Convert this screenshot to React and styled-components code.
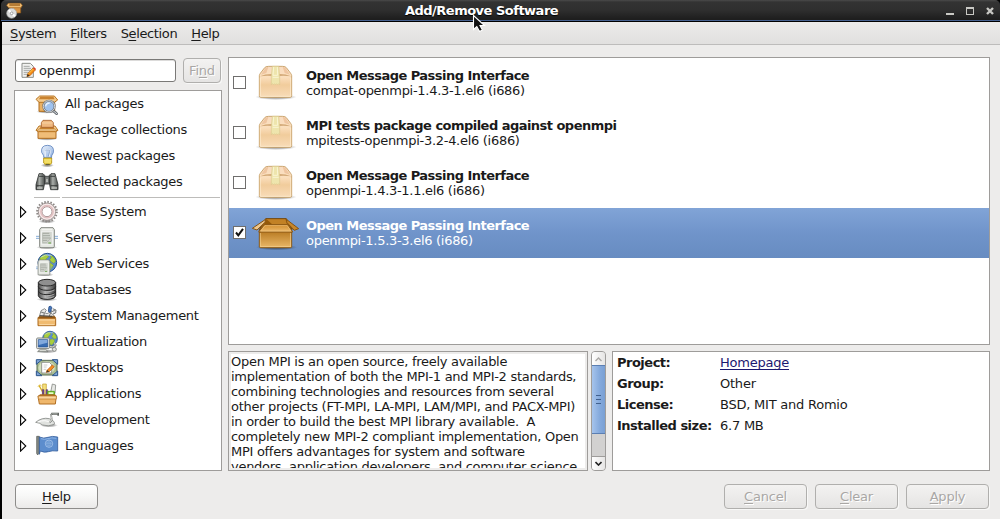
import React from 'react';
import styled, { createGlobalStyle, css } from 'styled-components';

const GlobalStyle = createGlobalStyle`
  *, *::before, *::after { box-sizing: border-box; }
  html, body { margin: 0; padding: 0; overflow: hidden; }
  body { font: 13px/15px "DejaVu Sans", sans-serif; letter-spacing: -.27px; color: #1a1a1a; background: #edeceb; }
  u { text-decoration: underline; text-decoration-thickness: 1px; text-underline-offset: 2px; text-decoration-skip-ink: none; }
  svg { display: block; flex: none; }
`;

const Window = styled.div`
  width: 1000px;
  height: 519px;
  display: flex;
  flex-direction: column;
  background: #000;
  overflow: hidden;
`;

const TitleBar = styled.header`
  position: relative;
  height: 22px;
  flex: none;
  display: grid;
  grid-template-columns: 60px 1fr 60px;
  margin-left: 1px;
  padding: 2px 6px 0 5px;
  background: linear-gradient(#4a4a4a 0, #333 2px, #2f2f2f 10px, #1e1e1e 19px);
  border-bottom: 1px solid #000;
  box-shadow: inset 0 -1px #46618f;
  border-radius: 5px 5px 0 0;
`;

const Title = styled.h1`
  margin: 0;
  padding: 1px 37px 0 0;
  text-align: center;
  font-size: 13px;
  line-height: 15px;
  letter-spacing: -.5px;
  color: #fff;
  text-shadow: 0 1px 1px #000;
`;

const WindowControls = styled.div`
  display: flex;
  justify-content: flex-end;
  gap: 12px;
  padding-top: 5px;
`;

const Pointer = styled.svg`
  position: absolute;
  left: 471px;
  top: 14px;
  z-index: 5;
`;

const Frame = styled.div`
  flex: 1;
  display: flex;
  flex-direction: column;
  border-left: 2px solid #000;
  background: #edeceb;
`;

const MenuBar = styled.nav`
  height: 23px;
  flex: none;
  display: flex;
  gap: 14px;
  padding: 4px 0 0 8px;
  letter-spacing: -.37px;
  background: linear-gradient(#ecebea, #e1e0df);
  border-bottom: 1px solid #bdbcbb;
`;

const MenuItem = styled.span`
  white-space: pre;
`;

const Content = styled.main`
  flex: 1;
  display: flex;
  gap: 6px;
  padding: 12px 10px 0 12px;
`;

const LeftColumn = styled.div`
  width: 208px;
  display: flex;
  flex-direction: column;
`;

const SearchRow = styled.div`
  height: 33px;
  display: flex;
  align-items: flex-start;
  gap: 7px;
  padding: 1px 1px 0;
`;

const SearchField = styled.div`
  width: 161px;
  height: 23px;
  margin-top: 1px;
  display: flex;
  align-items: center;
  gap: 3px;
  padding: 0 5px;
  letter-spacing: -.15px;
  background: #fff;
  border: 1px solid #7a7977;
  border-radius: 3px;
  box-shadow: inset 0 1px #dcdbda;
`;

const Button = styled.button`
  width: ${(p) => p.$width || 83}px;
  height: 25px;
  padding: 0;
  font: inherit;
  letter-spacing: -.2px;
  text-align: center;
  border-radius: 4px;
  border: 1px solid #8d8c8a;
  color: #1a1a1a;
  background: linear-gradient(#fff, #f8f8f7 45%, #ebeae9);
  ${(p) =>
    p.disabled &&
    css`
      color: #a9a7a5;
      text-shadow: 1px 1px #fff;
      border-color: #b0afad;
      background: linear-gradient(#f3f2f1, #e5e4e3);
      box-shadow: 1px 1px #f8f8f7;
    `}
`;

const Sidebar = styled.ul`
  height: 381px;
  margin: 0;
  padding: 0;
  list-style: none;
  background: #fff;
  border: 1px solid #9e9c9a;
`;

const SidebarRow = styled.li`
  height: 26px;
  display: grid;
  grid-template-columns: 20px 24px 1fr;
  align-items: center;
  padding-left: 0;
`;

const SidebarLabel = styled.span`
  padding: 0 0 2px 6px;
`;

const Expander = styled.svg`
  margin: 0 0 1px 5px;
`;

const SidebarDivider = styled.li`
  height: 4px;
  display: grid;
  grid-template-columns: 26px 1fr;
  gap: 2px;
  padding: 2px 1px 0 19px;
  &::before, &::after { content: ""; height: 1px; background: #bdbcba; }
`;

const RightColumn = styled.div`
  flex: 1;
  min-width: 0;
  display: flex;
  flex-direction: column;
  gap: 6px;
`;

const PackageList = styled.div`
  height: 288px;
  flex: none;
  background: #fff;
  border: 1px solid #9e9c9a;
`;

const PackageRow = styled.div`
  height: 50px;
  display: flex;
  align-items: center;
  padding-left: 4px;
  ${(p) =>
    p.$selected &&
    css`
      color: #fff;
      background: linear-gradient(#81a4d7, #7094ca 50%, #678cc1);
    `}
`;

const CheckBox = styled.span`
  width: 13px;
  height: 13px;
  margin: -1px 6px 0 0;
  background: #fff;
  border: 1px solid #6f6e6d;
`;

const PackageText = styled.div`
  display: flex;
  flex-direction: column;
  padding-left: 6px;
  white-space: nowrap;
  letter-spacing: -.29px;
  b { letter-spacing: -.53px; }
`;

const DetailRow = styled.div`
  height: 120px;
  display: flex;
`;

const Description = styled.div`
  width: 360px;
  height: 120px;
  border: 1px solid #9e9c9a;
  padding: 2px;
  background: #edeceb;
`;

const DescriptionText = styled.div`
  height: 114px;
  overflow: hidden;
  white-space: pre;
  letter-spacing: -.28px;
  background: #fff;
`;

const ScrollBar = styled.div`
  width: 15px;
  height: 120px;
  margin: 0 6px 0 3px;
  display: flex;
  flex-direction: column;
  background: #d2d1d0;
  border: 1px solid #9e9c9a;
  border-radius: 4px;
  overflow: hidden;
`;

const ScrollButton = styled.div`
  height: 14px;
  display: grid;
  place-items: center;
  background: linear-gradient(90deg, #fff, #e6e5e4);
  ${(p) => (p.$end ? 'border-top: 1px solid #9e9c9a; margin-top: auto;' : '')}
`;

const ScrollThumb = styled.div`
  height: 69px;
  margin: -1px -1px 0;
  display: flex;
  flex-direction: column;
  justify-content: center;
  align-items: center;
  gap: 2px;
  border: 1px solid #5b7fb3;
  background: linear-gradient(90deg, #a6c4ec, #84a9dc 60%, #799fd3);
`;

const Grip = styled.i`
  width: 5px;
  height: 1px;
  margin-bottom: 1px;
  background: #41618f;
`;

const Info = styled.dl`
  flex: 1;
  margin: 0;
  display: grid;
  grid-template-columns: 103px 1fr;
  grid-auto-rows: 21px;
  padding: 3px 0 0 4px;
  background: #fff;
  border: 1px solid #9e9c9a;
  letter-spacing: -.23px;
  dt { font-weight: bold; white-space: nowrap; letter-spacing: -.5px; }
  dd { margin: 0; }
`;

const HomeLink = styled.a`
  color: #1c1870;
  text-decoration: underline;
  text-decoration-skip-ink: none;
  text-decoration-thickness: 1px;
  text-underline-offset: 2px;
`;

const Footer = styled.footer`
  height: 48px;
  flex: none;
  display: flex;
  gap: 8px;
  padding: 13px 11px 0 13px;
`;

const Spacer = styled.span`
  flex: 1;
`;

const Gradients = () => (
  <svg width="0" height="0" style={{ position: 'absolute' }}>
    <defs>
      <linearGradient id="bulb" x1="0" y1="0" x2="1" y2="1"><stop stopColor="#eaf2fc" /><stop offset="1" stopColor="#8fb0e0" /></linearGradient>
      <linearGradient id="carton" x1="0" y1="0" x2="0" y2="1"><stop stopColor="#f9dcc0" /><stop offset=".35" stopColor="#fbdfbd" /><stop offset=".6" stopColor="#f1cc9c" /><stop offset="1" stopColor="#f8dcb8" /></linearGradient>
      <linearGradient id="crate" x1="0" y1="0" x2="0" y2="1"><stop stopColor="#b3741b" /><stop offset="1" stopColor="#eab868" /></linearGradient>
      <linearGradient id="flap" x1="0" y1="0" x2="0" y2="1"><stop stopColor="#d08a28" /><stop offset="1" stopColor="#eebd72" /></linearGradient>
      <linearGradient id="drum" x1="0" x2="1"><stop stopColor="#4b4b4b" /><stop offset=".4" stopColor="#b5b5b5" /><stop offset="1" stopColor="#3a3a3a" /></linearGradient>
      <linearGradient id="lens" x1="0" x2="1"><stop stopColor="#3d403e" /><stop offset=".4" stopColor="#a9ada9" /><stop offset="1" stopColor="#4a4e4c" /></linearGradient>
      <radialGradient id="shade"><stop stopColor="#000" stopOpacity=".45" /><stop offset=".6" stopColor="#000" stopOpacity=".25" /><stop offset="1" stopColor="#000" stopOpacity="0" /></radialGradient>
    </defs>
  </svg>
);

const Shade = ({ cy = 64, rx = 32, cx = 36 }) => <ellipse cx={cx} cy={cy} rx={rx} ry="6" fill="url(#shade)" />;

const Globe = ({ cx, cy, r }) => (
  <g transform={`translate(${cx} ${cy}) scale(${r / 29})`}>
    <circle r="28" fill="#5b8bd0" stroke="#234f91" strokeWidth="3" />
    <path d="M-22-14Q-14-25-3-24L4-18L-3-12L-8-3L-14 0L-11 8L-18 12Q-26 2-22-14ZM8-23Q20-20 25-5L20 2L12-2L7-9L12-15ZM0 3L10 1L18 8L12 19L4 25L-2 15Z" fill="#a9cf3e" stroke="#789c26" strokeWidth="1.5" />
    <path d="M-20-16Q-6-27 13-22" fill="none" stroke="#d5e5fb" strokeWidth="2" />
  </g>
);

const Server = () => (
  <g>
    <path d="M18 5h36l4 6v50q0 4-4 4H18q-4 0-4-4V11z" fill="#e4e7e1" stroke="#858983" strokeWidth="3" />
    <path d="M21 10h30M20 16v40h32V16z" fill="#d2d6cf" stroke="#fff" strokeWidth="2" />
    <path d="M23 22h20M23 29h22M23 36h24M23 43h14" stroke="#9ba098" strokeWidth="2.5" />
    <path d="M23 22v28h12l12-14" fill="none" stroke="#abb0a8" strokeWidth="2" />
    <path d="M40 51h8" stroke="#5d9c3a" strokeWidth="3" />
  </g>
);

const icons = {
  search: (
    <g>
      <Shade cy={59} />
      <path d="M12 25h47v33H12z" fill="#eab164" stroke="#b06d1c" strokeWidth="3" />
      <path d="M14 12h44l10 12-10 7H12L3 22z" fill="#f4cb8e" stroke="#b87522" strokeWidth="3" />
      <path d="M16 14h39l4 8H12z" fill="#c98331" />
      <path d="M53 55l12 10" stroke="#656a70" strokeWidth="8" strokeLinecap="round" />
      <path d="M53 55l12 10" stroke="#d7dce2" strokeWidth="3" strokeLinecap="round" />
      <circle cx="42" cy="43" r="17" fill="#9fc2ee" stroke="#6b7076" strokeWidth="6" />
      <circle cx="42" cy="43" r="17" fill="none" stroke="#e6e8ea" strokeWidth="2.5" />
      <path d="M32 43q1-10 12-10" stroke="#e8f2fe" strokeWidth="4" fill="none" />
    </g>
  ),
  collection: (
    <g>
      <Shade cy={62} />
      <path d="M9 36h54v25H9z" fill="#f0bd78" stroke="#af6b1f" strokeWidth="3" />
      <path d="M12 24h48l9 13-7 4H10l-7-4z" fill="#f7d29b" stroke="#b87522" strokeWidth="3" />
      <path d="M16 27h40l3 7H13z" fill="#cd8734" />
      <path d="M24 7h25l6 7v14H19V14z" fill="#f0b980" stroke="#a7602a" strokeWidth="2.5" />
      <path d="M21 15h32" stroke="#fbe2bd" strokeWidth="2" />
      <path d="M11 33h50l5 6H6z" fill="#f9d9a8" stroke="#b87522" strokeWidth="2" />
    </g>
  ),
  bulb: (
    <g>
      <Shade cy={64} cx={37} rx={20} />
      <path d="M27 42Q27 34 20 25Q17 4 38 4Q59 5 55 26Q49 34 49 42z" fill="url(#bulb)" stroke="#5d82bd" strokeWidth="2.5" />
      <path d="M31 38L30 20Q34 14 38 20Q42 14 46 20L43 38" stroke="#fff" strokeWidth="2.5" fill="none" />
      <path d="M31 20q4-4 7 0q4-4 7 0l-5 17" stroke="#6684b3" strokeWidth="1.5" fill="none" />
      <path d="M26 42h24v15l-5 5H31l-5-5z" fill="#ecd03c" stroke="#b28d0c" strokeWidth="2.5" />
      <path d="M27 48h22M28 54h20" stroke="#fff5a2" strokeWidth="2.5" />
      <path d="M32 61h12" stroke="#55533f" strokeWidth="3" />
    </g>
  ),
  binoculars: (
    <g>
      <path d="M29 19h14v23H29z" fill="#7c807e" stroke="#353938" strokeWidth="2.5" />
      <path d="M12 11h12l5 5v23l-4 20H3V44z" fill="url(#lens)" stroke="#303432" strokeWidth="2.5" />
      <path d="M60 11H48l-5 5v23l4 20h22V44z" fill="url(#lens)" stroke="#303432" strokeWidth="2.5" />
      <path d="M5 47h20M47 47h20M12 19h14M46 19h14" stroke="#2c302f" strokeWidth="2.5" />
      <path d="M6 54h16M50 54h16" stroke="#b8bbb7" strokeWidth="4" />
      <path d="M33 27h6v9h-6z" fill="#b3b6b2" />
    </g>
  ),
  gear: (
    <g>
      <Shade cy={64} rx={26} />
      <circle cx="36" cy="35" r="29.5" fill="none" stroke="#8d8886" strokeWidth="6" strokeDasharray="4.6 4.67" />
      <circle cx="36" cy="35" r="26" fill="#efdddd" stroke="#8f8786" strokeWidth="2.5" />
      <circle cx="36" cy="35" r="22" fill="none" stroke="#f8efee" strokeWidth="3" />
      <circle cx="36" cy="35" r="15" fill="#fff" stroke="#98807f" strokeWidth="2.5" />
      <circle cx="36" cy="35" r="18.5" fill="none" stroke="#e2bfc0" strokeWidth="4" />
    </g>
  ),
  server: (
    <g>
      <Shade />
      <path d="M3 31h66M3 37h66" stroke="#6e9bd0" strokeWidth="2.5" />
      <Server />
    </g>
  ),
  web: (
    <g>
      <Shade cx={30} cy={68} rx={26} />
      <Globe cx={37} cy={32} r={29} />
      <path d="M3 45h6M3 50h6M45 45h7M45 50h7" stroke="#6e9bd0" strokeWidth="2" />
      <g transform="translate(-2 20) scale(.8 .75)"><Server /></g>
    </g>
  ),
  database: (
    <g>
      <Shade />
      <path d="M10 14v39q3 11 26 11t26-11V14z" fill="url(#drum)" stroke="#252525" strokeWidth="3" />
      <path d="M10 26q3 11 26 11t26-11M10 39q3 11 26 11t26-11" fill="none" stroke="#2b2b2b" strokeWidth="3" />
      <path d="M35 42q15-1 23-6M35 54q15-1 23-6M35 61q15-1 23-6" fill="none" stroke="#c9c9c9" strokeWidth="2" />
      <ellipse cx="36" cy="14" rx="26" ry="10" fill="#8f8f8f" stroke="#2a2a2a" strokeWidth="3" />
    </g>
  ),
  toolbox: (
    <g>
      <path d="M12 42l6-22 11-6 5 5-5 7 7 3 8-4 12 8 3 10z" fill="#e9e9e7" stroke="#777a78" strokeWidth="2.5" />
      <path d="M18 24l10 3-2 11M50 19l-8 19M46 26l14-8M53 14l10 4-1 9-8 3" fill="#ddd" stroke="#777a78" strokeWidth="3" />
      <path d="M42 8q6-4 8 2l-3 13q-4 4-7-1z" fill="#4978bb" stroke="#224b89" strokeWidth="2.5" />
      <path d="M8 42h54l-3-5H14z" fill="#825016" stroke="#9e6118" strokeWidth="2" />
      <path d="M9 43h53v22H9z" fill="#f0bb70" stroke="#ab681b" strokeWidth="3" />
      <path d="M11 48h49M13 62h45" stroke="#fbdba8" strokeWidth="3" />
      <path d="M14 35l38 2" stroke="#444" strokeWidth="3" />
    </g>
  ),
  virtual: (
    <g>
      <Shade cx={35} />
      <Globe cx={45} cy={26} r={23} />
      <path d="M44 50q12 4 17-4l-2-8" fill="none" stroke="#777b7a" strokeWidth="7" />
      <path d="M44 50q12 4 17-4l-2-8" fill="none" stroke="#e1e2df" strokeWidth="3" />
      <path d="M17 57h14l8 8H8z" fill="#d5d8d2" stroke="#777b76" strokeWidth="2.5" />
      <rect x="5" y="24" width="38" height="32" rx="3" fill="#edeeeb" stroke="#7e827d" strokeWidth="3" />
      <path d="M10 29h28v22H10z" fill="#396db4" stroke="#204b8b" strokeWidth="2" />
      <path d="M11 30h26v8L11 45z" fill="#82a9dd" />
      <circle cx="58" cy="58" r="6" fill="#e4e5e2" stroke="#777b76" strokeWidth="2.5" />
    </g>
  ),
  desktop: (
    <g>
      <path d="M6 13h60v44H6z" fill="#a9bd91" stroke="#586c53" strokeWidth="3" />
      <ellipse cx="35" cy="35" rx="25" ry="19" fill="#d2deb9" />
      <path d="M4 11h17L4 25zM68 11H52l16 14zM4 59h17L4 45zM68 59H52l16-14z" fill="#7fa5d6" stroke="#2f578d" strokeWidth="3" />
      <path d="M20 19h23l7 7v25H20z" fill="#fff" stroke="#82857f" strokeWidth="2.5" />
      <path d="M26 27h11M26 33h9M26 40h8" stroke="#b4b7b1" strokeWidth="2" />
      <path d="M36 43l16-16 6 5-15 15-9 2z" fill="#f38e23" stroke="#b95510" strokeWidth="2" />
      <path d="M34 49l3-7 6 5z" fill="#443b27" />
    </g>
  ),
  apps: (
    <g>
      <path d="M12 10l16 29" stroke="#d5aa20" strokeWidth="4" />
      <path d="M9 14l6-6 5 5" fill="none" stroke="#e1bd39" strokeWidth="3" />
      <path d="M23 6h11v34H23z" fill="#f5df7a" stroke="#bf9b24" strokeWidth="2" />
      <path d="M22 23h5v17h-5zM33 23h5v17h-5z" fill="#744d92" stroke="#4c2a68" strokeWidth="1.5" />
      <path d="M47 31l5-25 10 3-2 25z" fill="#e7e8e5" stroke="#888b87" strokeWidth="2.5" />
      <path d="M38 28h20v12H38z" fill="#81d536" stroke="#4c9712" strokeWidth="2.5" />
      <path d="M41 31h14v5H41z" fill="#e7fbd4" />
      <path d="M10 43l5-6h45l5 6z" fill="#a96822" />
      <path d="M9 42h55l-3 24H13z" fill="#efb76c" stroke="#b16e22" strokeWidth="3" />
      <path d="M10 42h54v9H10z" fill="#f9d59e" stroke="#b87727" strokeWidth="2" />
    </g>
  ),
  trowel: (
    <g>
      <Shade cx={42} cy={52} rx={27} />
      <path d="M2 43Q21 27 43 32Q61 39 58 49Q40 57 23 51Q13 44 2 43Z" fill="#dfe1de" stroke="#858985" strokeWidth="2.5" />
      <path d="M8 42q22-9 43 3" stroke="#fff" strokeWidth="3" fill="none" />
      <path d="M43 42q8 0 7-10l-2-12 5-3" stroke="#7b7f7b" strokeWidth="5" fill="none" />
      <path d="M43 42q8 0 7-10l-2-12 5-3" stroke="#f4f4f2" strokeWidth="2" fill="none" />
      <path d="M49 17h21v6" stroke="#626662" strokeWidth="6" fill="none" />
      <path d="M51 16h17" stroke="#b7bbb6" strokeWidth="2" />
    </g>
  ),
  flag: (
    <g>
      <path d="M5 7h8v48l-5 8-3-5z" fill="#858985" stroke="#525652" strokeWidth="2" />
      <path d="M13 9q13 6 26 1t29-1v42q-16-2-28 2t-24-2l-3 10z" fill="#5c8dcd" stroke="#355f9e" strokeWidth="2.5" />
      <path d="M18 14q11 4 21 0t25-1" stroke="#8eb4e5" strokeWidth="3" fill="none" />
      <circle cx="42" cy="29" r="11" fill="none" stroke="#a9c6ec" strokeWidth="2.5" />
      <path d="M36 24h11v10H36zM42 20v19M33 29h18" fill="none" stroke="#8db2e1" strokeWidth="2" />
    </g>
  ),
};

const SideIcon = ({ name }) => <svg width="24" height="24" viewBox="0 0 72 72">{icons[name]}</svg>;

const ClosedBox = () => (
  <svg width="48" height="48" viewBox="0 0 144 144">
    <ellipse cx="72" cy="114" rx="62" ry="9" fill="url(#shade)" />
    <path d="M22 50Q22 47 25 43L38 26Q41 22 50 22H91Q100 22 103 26L116 43Q119 47 119 50V110Q119 115 115 115H26Q22 115 22 110Z" fill="url(#carton)" stroke="#c49c63" strokeWidth="2.6" />
    <path d="M27 47L40 28Q44 24 49 24L43 42zM114 47L101 28Q97 24 92 24L98 42z" fill="#efc5a0" />
    <path d="M24 52Q45 43 70 46Q96 43 117 52Q94 49 71 52Q46 49 24 52Z" fill="#d3a977" />
    <path d="M25 56V112H116V56" fill="none" stroke="#fff0d8" strokeWidth="2" />
    <path d="M61 22h19l3 28v27l-3-3-3 3-3-3-3 3-3-3-3 3-3-3-4 3V50z" fill="#eee5ad" stroke="#d4c487" strokeWidth="1.5" />
    <path d="M65 24l-2 25h14l-1-25M62 55h18" stroke="#faf5d3" strokeWidth="3" fill="none" />
  </svg>
);

const OpenBox = () => (
  <svg width="48" height="48" viewBox="0 0 144 144">
    <ellipse cx="74" cy="115" rx="62" ry="9" fill="url(#shade)" />
    <path d="M41 29H103L120 62H22Z" fill="#a76812" stroke="#744506" strokeWidth="3" />
    <path d="M44 31H100L105 47H38Z" fill="#c28125" />
    <path d="M44 31L62 47H36Z" fill="#955909" />
    <path d="M41 31L1 58L15 63L39 40Z" fill="#edc68d" stroke="#885411" strokeWidth="3" />
    <path d="M103 31L140 59L127 64L105 41Z" fill="#c9872b" stroke="#885411" strokeWidth="3" />
    <path d="M22 62H119V112Q119 116 115 116H26Q22 116 22 112Z" fill="url(#crate)" stroke="#80500f" strokeWidth="3" />
    <path d="M25 72V113H116V72" fill="none" stroke="#f6d497" strokeWidth="2" />
    <path d="M37 47H107L122 69H20Z" fill="url(#flap)" stroke="#8a5715" strokeWidth="3" />
    <path d="M39 50H106L117 66H26Z" fill="none" stroke="#f1c580" strokeWidth="2" />
  </svg>
);

const AppIcon = () => (
  <svg width="18" height="18" viewBox="0 0 54 54">
    <path d="M11 13h33v20H11z" fill="#d99545" stroke="#8d5516" strokeWidth="2" />
    <path d="M7 4h37l5 6-4 7H8L2 10z" fill="#eebd75" stroke="#a3641d" strokeWidth="2" />
    <path d="M10 9h32" stroke="#9b5c17" strokeWidth="4" />
    <circle cx="17" cy="34" r="15" fill="#dcdddb" stroke="#a0a2a0" strokeWidth="2" />
    <path d="M8 24l9 10 10 9" stroke="#fff" strokeWidth="6" />
    <circle cx="17" cy="34" r="4" fill="#fff" stroke="#777" strokeWidth="2" />
  </svg>
);

const EditIcon = () => (
  <svg width="15" height="17" viewBox="0 0 45 51">
    <path d="M3 4h25l9 9v33H3z" fill="#f2f2f0" stroke="#8b8d89" strokeWidth="3" />
    <path d="M8 13h18M8 19h22M8 25h20M8 31h16M8 37h10" stroke="#989a96" strokeWidth="2.5" />
    <path d="M20 35L36 18l7 6-16 17-9 3z" fill="#f58a16" stroke="#b85a0b" strokeWidth="2" />
    <path d="M23 35L38 20" stroke="#fcd04b" strokeWidth="3" />
    <path d="M36 18l4-2 5 5-2 4z" fill="#dd3d2b" />
    <path d="M17 44l3-8 6 5z" fill="#3b3223" />
  </svg>
);

const sources = [
  ['search', 'All packages'],
  ['collection', 'Package collections'],
  ['bulb', 'Newest packages'],
  ['binoculars', 'Selected packages'],
];

const groups = [
  ['gear', 'Base System'],
  ['server', 'Servers'],
  ['web', 'Web Services'],
  ['database', 'Databases'],
  ['toolbox', 'System Management'],
  ['virtual', 'Virtualization'],
  ['desktop', 'Desktops'],
  ['apps', 'Applications'],
  ['trowel', 'Development'],
  ['flag', 'Languages'],
];

const packages = [
  ['Open Message Passing Interface', 'compat-openmpi-1.4.3-1.el6 (i686)'],
  ['MPI tests package compiled against openmpi', 'mpitests-openmpi-3.2-4.el6 (i686)'],
  ['Open Message Passing Interface', 'openmpi-1.4.3-1.1.el6 (i686)'],
  ['Open Message Passing Interface', 'openmpi-1.5.3-3.el6 (i686)', true],
];

const description = `Open MPI is an open source, freely available
implementation of both the MPI-1 and MPI-2 standards,
combining technologies and resources from several
other projects (FT-MPI, LA-MPI, LAM/MPI, and PACX-MPI)
in order to build the best MPI library available.  A
completely new MPI-2 compliant implementation, Open
MPI offers advantages for system and software
vendors, application developers, and computer science`;

export default function App() {
  return (
    <Window>
      <GlobalStyle />
      <Gradients />
      <TitleBar>
        <AppIcon />
        <Title>Add/Remove Software</Title>
        <WindowControls>
          <svg width="8" height="8"><path d="M0 6h8v2H0z" fill="#c8c8c4" /></svg>
          <svg width="8" height="8"><path d="M0 0h8v8H0zM1 2v5h6V2z" fillRule="evenodd" fill="#c8c8c4" /></svg>
          <svg width="8" height="8"><path d="M1 1l6 6M7 1L1 7" stroke="#c8c8c4" strokeWidth="2.4" /></svg>
        </WindowControls>
        <Pointer width="16" height="22" viewBox="0 0 16 22">
          <path d="M1.5 1.5V15.5L4.8 12.5L7.6 17.5L10.4 16L8 11.5H12.5Z" fill="#111" stroke="#fff" strokeWidth="1.1" />
        </Pointer>
      </TitleBar>
      <Frame>
        <MenuBar>
          <MenuItem><u>S</u>ystem</MenuItem>
          <MenuItem><u>F</u>ilters</MenuItem>
          <MenuItem>S<u>e</u>lection</MenuItem>
          <MenuItem><u>H</u>elp</MenuItem>
        </MenuBar>
        <Content>
          <LeftColumn>
            <SearchRow>
              <SearchField><EditIcon />openmpi</SearchField>
              <Button $width={38} disabled>Fi<u>n</u>d</Button>
            </SearchRow>
            <Sidebar>
              {sources.map(([icon, label]) => (
                <SidebarRow key={label}><span /><SideIcon name={icon} /><SidebarLabel>{label}</SidebarLabel></SidebarRow>
              ))}
              <SidebarDivider />
              {groups.map(([icon, label]) => (
                <SidebarRow key={label}>
                  <Expander width="8" height="12" viewBox="0 0 8 12"><path d="M.6 .9V11.1L5.8 6Z" fill="#fff" stroke="#000" strokeWidth="1.1" /></Expander>
                  <SideIcon name={icon} />
                  <SidebarLabel>{label}</SidebarLabel>
                </SidebarRow>
              ))}
            </Sidebar>
          </LeftColumn>
          <RightColumn>
            <PackageList>
              {packages.map(([name, version, selected]) => (
                <PackageRow key={version} $selected={selected}>
                  <CheckBox>
                    {selected && <svg width="11" height="11" viewBox="0 0 11 11"><path d="M2 5.5L4.3 8.3L9 1.8" fill="none" stroke="#111" strokeWidth="2" /></svg>}
                  </CheckBox>
                  {selected ? <OpenBox /> : <ClosedBox />}
                  <PackageText><b>{name}</b><span>{version}</span></PackageText>
                </PackageRow>
              ))}
            </PackageList>
            <DetailRow>
              <Description><DescriptionText>{description}</DescriptionText></Description>
              <ScrollBar>
                <ScrollButton><svg width="7" height="5"><path d="M.5 4L3.5 1L6.5 4" fill="none" stroke="#aaa8a6" strokeWidth="1.4" /></svg></ScrollButton>
                <ScrollThumb><Grip /><Grip /><Grip /></ScrollThumb>
                <ScrollButton $end><svg width="7" height="5"><path d="M.5 1L3.5 4L6.5 1" fill="none" stroke="#222" strokeWidth="1.6" /></svg></ScrollButton>
              </ScrollBar>
              <Info>
                <dt>Project:</dt><dd><HomeLink>Homepage</HomeLink></dd>
                <dt>Group:</dt><dd>Other</dd>
                <dt>License:</dt><dd>BSD, MIT and Romio</dd>
                <dt>Installed size:</dt><dd>6.7 MB</dd>
              </Info>
            </DetailRow>
          </RightColumn>
        </Content>
        <Footer>
          <Button><u>H</u>elp</Button>
          <Spacer />
          <Button disabled><u>C</u>ancel</Button>
          <Button disabled><u>C</u>lear</Button>
          <Button disabled><u>A</u>pply</Button>
        </Footer>
      </Frame>
    </Window>
  );
}
